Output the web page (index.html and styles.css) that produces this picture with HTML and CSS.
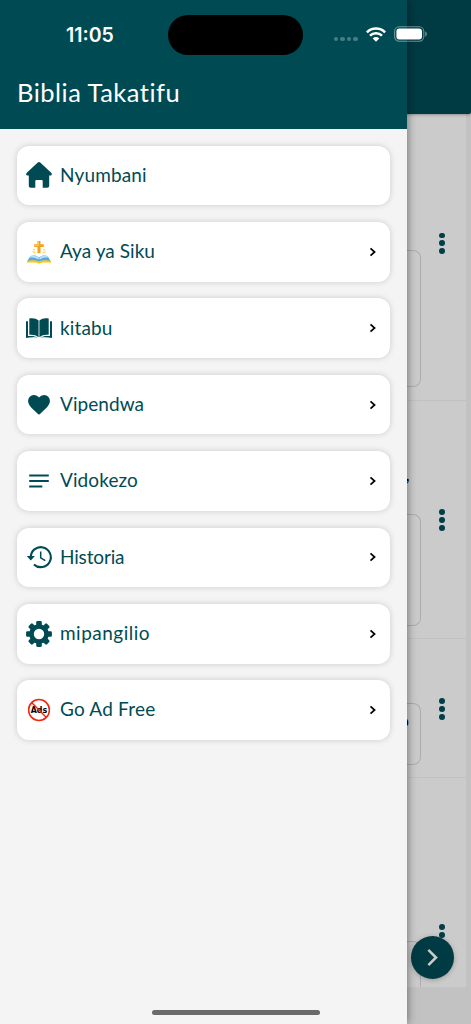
FILE: index.html
```html
<!DOCTYPE html>
<html lang="sw">
<head>
<meta charset="utf-8">
<title>Biblia Takatifu</title>
<link rel="stylesheet" href="styles.css">
</head>
<body>
<div class="screen">
  <div class="page">
    <div class="page-header"></div>
    <div class="feed">
      <section class="entry entry-a"><div class="verse"></div><div class="dots"><i></i><i></i><i></i></div></section>
      <section class="entry entry-b"><p class="entry-title">,</p><div class="verse"></div><div class="dots"><i></i><i></i><i></i></div></section>
      <section class="entry entry-c"><div class="verse">o</div><div class="dots"><i></i><i></i><i></i></div></section>
      <section class="entry entry-d"><div class="verse"></div><div class="dots"><i></i><i></i><i></i></div></section>
    </div>
  </div>
  <div class="fab"><svg width="43" height="43" viewBox="0 0 43 43"><path d="M18.300 14.800l6.700 6.700-6.700 6.700" fill="none" stroke="#cacccc" stroke-width="2.600" stroke-linecap="square"/></svg></div>

  <aside class="drawer">
    <header class="drawer-header"><h1>Biblia Takatifu</h1></header>
    <nav class="menu">
      <a class="item"><svg class="icon" viewBox="0 0 26 26"><path class="fill" d="M11.500 .7Q13 -.5 14.500 .7L25.200 10.800C26.400 12 26 13.600 24.500 13.600H23.200V23.800C23.200 25 22.400 25.800 21.200 25.800H16.700V19.200C16.700 18.400 16.200 17.900 15.400 17.900H10.600C9.800 17.900 9.300 18.400 9.300 19.200V25.800H4.800C3.600 25.800 2.800 25 2.800 23.800V13.600H1.500C0 13.600 -.4 12 .8 10.800Z"/></svg><span class="label l1">Nyumbani</span></a>
      <a class="item"><svg class="icon" viewBox="0 0 26 26">
        <path d="M11.500 2h3v3.200h3.300v2.900h-3.300v6.200h-3V8.100H8.200V5.200h3.300z" fill="#f7a01c"/><path d="M12 2.500h1v4.600H8.700V5.700H12z" fill="#ffc642"/>
        <path d="M7 10l1.800 1.200M6.500 12.500l3 1.500M19 10l-1.800 1.200M19.500 12.500l-3 1.500" stroke="#ffd93a" stroke-width="1.200"/>
        <path d="M1 22.500L4.500 17c3-1 6-.8 8.500 1.500 2.500-2.300 5.500-2.500 8.500-1.500l3.500 5.500c-4-1-8.500-1-12 .5-3.500-1.500-8-1.500-12-.5z" fill="#55a8e8"/>
        <path d="M5 16.700c3-.8 5.600 0 8 2.300l-1 1.500c-2.500-2-5-2.300-8.500-1.900zM21 16.700c-3-.8-5.600 0-8 2.300l1 1.500c2.500-2 5-2.300 8.500-1.900z" fill="#b8e1fa"/>
        <path d="M1 21.800c4.500-.8 8.500-.7 12 .6 3.500-1.300 7.500-1.400 12-.6v2c-3.500-.4-7-.4-10.500.2-1 .8-2 .8-3 0-3.500-.6-7-.6-10.500-.2z" fill="#ffc80a"/>
      </svg><span class="label l2">Aya ya Siku</span><svg class="chev" viewBox="0 0 8 10"><path d="M1.500 1.300L5.600 5 1.500 8.700"/></svg></a>
      <a class="item"><svg class="icon" viewBox="0 0 26 26">
        <path class="fill" d="M12.600 5.500C9.800 3 6.300 2.800 3.300 3.500v16.300c3.500-.5 6.700.2 9.300 2.400zM13.400 5.500c2.800-2.500 6.300-2.700 9.300-2v16.300c-3.500-.5-6.700.2-9.300 2.400z"/>
        <path class="fill" d="M0 6.300h2v14.800c4-.4 7.200-.1 9.800 1.500-4.200-.6-8-.5-11.800.4zM26 6.300h-2v14.800c-4-.4-7.200-.1-9.800 1.500 4.200-.6 8-.5 11.800.4z"/>
      </svg><span class="label l3">kitabu</span><svg class="chev" viewBox="0 0 8 10"><path d="M1.500 1.300L5.600 5 1.500 8.700"/></svg></a>
      <a class="item"><svg class="icon" viewBox="0 0 26 26"><path class="fill" d="M13 22.800l-1.500-1.400C5.600 16 2.100 13 2.100 9a5.700 5.700 0 0 1 5.800-5.900c2 0 3.900.9 5.100 2.500A6.500 6.500 0 0 1 18.100 3.100 5.700 5.700 0 0 1 23.900 9c0 4-3.500 7-9.400 12.400z"/></svg><span class="label l4">Vipendwa</span><svg class="chev" viewBox="0 0 8 10"><path d="M1.500 1.300L5.600 5 1.500 8.700"/></svg></a>
      <a class="item"><svg class="icon" viewBox="0 0 26 26"><path class="fill" d="M3.200 6.400h19.600v2.200H3.200zM3.200 11.900h19.600v2.200H3.200zM3.200 17.400h13.100v2.200H3.200z"/></svg><span class="label l5">Vidokezo</span><svg class="chev" viewBox="0 0 8 10"><path d="M1.500 1.300L5.600 5 1.500 8.700"/></svg></a>
      <a class="item"><svg class="icon" viewBox="0 0 26 26"><path d="M4.800 13.500A10 10 0 1 1 7.900 20.400" fill="none" stroke="#004b53" stroke-width="2.100"/><path class="fill" d="M.7 12h8.200l-4.100 4.500z"/><path d="M14.700 7.500v6.300l4.600 2.800" fill="none" stroke="#004b53" stroke-width="1.500"/></svg><span class="label l6">Historia</span><svg class="chev" viewBox="0 0 8 10"><path d="M1.500 1.300L5.600 5 1.500 8.700"/></svg></a>
      <a class="item"><svg class="icon" viewBox="0 0 26 26">
        <g class="fill"><g id="teeth"><rect x="10.200" y=".1" width="5.600" height="25.800" rx="1.300"/><rect x=".1" y="10.200" width="25.800" height="5.600" rx="1.300"/></g><use href="#teeth" transform="rotate(45 13 13)"/><circle cx="13" cy="13" r="9.800"/></g><circle cx="13" cy="13" r="5.200" fill="#fff"/>
      </svg><span class="label l7">mipangilio</span><svg class="chev" viewBox="0 0 8 10"><path d="M1.500 1.300L5.600 5 1.500 8.700"/></svg></a>
      <a class="item"><svg class="icon" viewBox="0 0 26 26"><text x="13" y="15.900" class="ads" text-anchor="middle" textLength="16.500" lengthAdjust="spacingAndGlyphs">Ads</text><circle cx="13" cy="13" r="10.400" fill="none" stroke="#f5220c" stroke-width="1.500"/><path d="M5.600 5.600l14.800 14.800" stroke="#f5220c" stroke-width="1.400"/></svg><span class="label l8">Go Ad Free</span><svg class="chev" viewBox="0 0 8 10"><path d="M1.500 1.300L5.600 5 1.500 8.700"/></svg></a>
    </nav>
  </aside>

  <div class="status">
    <span class="time">11:05</span>
    <span class="island"></span>
    <span class="signal"><i></i><i></i><i></i><i></i></span>
    <svg class="wifi" width="20" height="15" viewBox="0 0 20 15"><g fill="none" stroke="#fff" stroke-width="2.500"><path d="M.9 5.300a13 13 0 0 1 18.200 0"/><path d="M4 8.700a8.500 8.500 0 0 1 12 0"/></g><path d="M10 14.700l-3.300-3.300a4.700 4.700 0 0 1 6.600 0z" fill="#fff"/></svg>
    <svg class="battery" width="34" height="16" viewBox="0 0 34 16"><rect x=".6" y=".8" width="29.200" height="14.400" rx="4.600" fill="none" stroke="#fff" stroke-opacity=".42" stroke-width="1.100"/><rect x="2.400" y="2.600" width="25.600" height="10.800" rx="3" fill="#fff"/><path d="M31.300 5.500c1.900.6 1.900 4.400 0 5z" fill="#fff" fill-opacity=".5"/></svg>
  </div>
  <div class="home-bar"></div>
</div>
</body>
</html>
```
FILE: styles.css
```css
* { box-sizing: border-box; }
body { margin: 0; font-family: Lato, sans-serif; }
.screen { position: relative; width: 471px; height: 1024px; overflow: hidden; background: #c2c2c2; }

.page-header { height: 113.500px; background: #003a42; border-radius: 0 0 2px 0; box-shadow: 0 1px 3px rgba(0,0,0,.3); position: relative; }
.feed { width: 466px; height: 873.500px; background: #cbcbcb; overflow: hidden; }
.entry { display: grid; grid-template-columns: 421px 41px; align-items: start; border-bottom: 1px solid #c1c1c1; }
.entry-a { height: 287.500px; padding-top: 136.500px; }
.entry-b { height: 238px; padding-top: 113px; position: relative; }
.entry-c { height: 139px; padding-top: 63.500px; }
.entry-d { height: 209px; padding-top: 163px; border: 0; }
.verse { border: 1px solid #adadad; border-left: 0; border-radius: 0 8px 8px 0; color: #000; font-size: 17px; line-height: 20px; text-align: right; padding: 7px 11px; }
.entry-a .verse { height: 137px; }
.entry-b .verse { height: 112px; }
.entry-c .verse { height: 62px; }
.entry-d .verse { height: 90px; }
.entry-title { position: absolute; left: 406px; top: 62px; margin: 0; font: italic 19px/22px Lato, sans-serif; color: #000; }
.dots { display: flex; flex-direction: column; gap: 2.200px; align-items: center; padding-left: 1px; }
.dots i { width: 5.800px; height: 5.800px; border-radius: 50%; background: #003f47; }
.entry-a .dots { margin-top: -17.500px; }
.entry-b .dots { margin-top: -5px; }
.entry-c .dots { margin-top: -4.500px; }
.entry-d .dots { margin-top: -17px; }

.fab { position: absolute; left: 411px; top: 936px; width: 43px; height: 43px; border-radius: 50%; background: #003a42; box-shadow: 0 1px 5px rgba(0,0,0,.25); }
.fab svg { display: block; }

.drawer { position: absolute; left: 0; top: 0; width: 406.500px; height: 1024px; background: #f4f4f4; box-shadow: 0 0 9px rgba(0,0,0,.5); }
.drawer-header { height: 128.500px; background: #004b53; padding: 76px 0 0 17px; }
h1 { margin: 0; font-size: 25.500px; line-height: 32px; font-weight: 400; color: #fff; letter-spacing: .48px; white-space: nowrap; }
.menu { padding: 17.200px 17px; display: flex; flex-direction: column; gap: 16.800px; }
.item { height: 59.600px; display: flex; align-items: center; padding: 0 13px 0 9px; background: #fff; border-radius: 12px; box-shadow: 0 0 6px rgba(0,0,0,.17); }
.icon { width: 26px; height: 26px; flex: none; margin-right: 8px; overflow: visible; }
.fill { fill: #004b53; }
.ads { font: 900 8.500px "DejaVu Sans", sans-serif; fill: #000; }
.label { flex: 1; padding-bottom: 1.500px; font-size: 19px; line-height: 24px; color: #004b53; white-space: nowrap; }
.l1 { letter-spacing: .15px; }
.l2 { letter-spacing: .05px; }
.l3 { letter-spacing: .12px; }
.l4 { letter-spacing: .06px; }
.l5 { letter-spacing: .1px; }
.l6 { letter-spacing: -.15px; }
.l7 { letter-spacing: .48px; }
.l8 { letter-spacing: .2px; }
.chev { width: 8px; height: 10px; }
.chev path { fill: none; stroke: #000; stroke-width: 1.700; }

.status { position: absolute; left: 0; top: 14.500px; width: 471px; height: 40px; display: flex; align-items: center; padding-left: 66px; color: #fff; }
.time { width: 102px; font: 600 19.500px Inter, sans-serif; letter-spacing: 0; }
.island { width: 135px; height: 40px; border-radius: 20px; background: #000; }
.signal { display: flex; gap: 2.300px; margin: 9px 0 0 31px; }
.signal i { width: 4.200px; height: 4.200px; border-radius: 50%; background: rgba(255,255,255,.28); }
.wifi { margin: -1px 0 0 8px; }
.battery { margin: -1px 0 0 8px; }
.home-bar { position: absolute; left: 151.500px; top: 1009.500px; width: 168.500px; height: 5.500px; border-radius: 3px; background: #6a6a6a; }
```
